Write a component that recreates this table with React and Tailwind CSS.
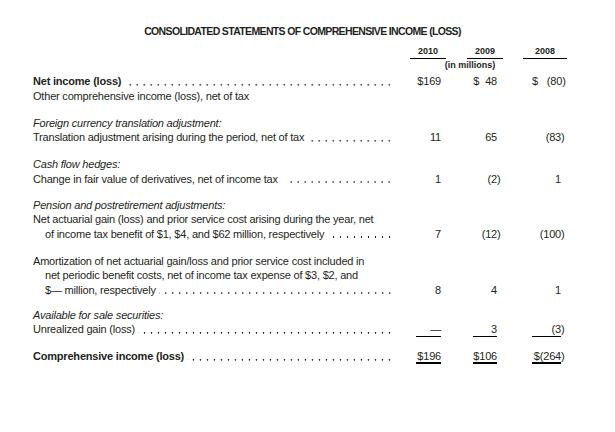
// hanging close paren so digits stay aligned
const Num = ({ children, close }) => (
  <>
    {children}
    {close && <span className="inline-block w-0 text-left">)</span>}
  </>
);

const FS = () => <span className="inline-block w-[6.1px]" />;

const cols = [
  { cell: "ml-[17px] w-[36px]", box: "mr-[5px] w-[25px]" },
  { cell: "ml-[21px] w-[36px]", box: "mr-[6px] w-[24px]" },
  { cell: "ml-[20px] w-[44px]", box: "mr-[6px] w-[29px]" },
];

// dot leader, spaced 7px, anchored to the right edge
const Leader = () => (
  <span className="flex-1 min-w-0 ml-[3px] h-[14.5px] bg-[radial-gradient(circle_at_3.5px_10.4px,#231f20_0.6px,transparent_1.1px)] bg-[length:7px_14.5px] bg-repeat-x bg-right" />
);

const Row = ({ label, bold, italic, indent, values, dots, rule, className = "" }) => (
  <div className={`flex ${className}`}>
    <div className={`flex w-[360px] whitespace-nowrap ${indent ? "pl-[12px]" : ""}`}>
      <span className={`shrink-0 ${bold ? "font-bold" : ""} ${italic ? "italic" : ""}`}>
        {label}
      </span>
      {dots && <Leader />}
    </div>
    {values &&
      values.map((v, i) => (
        <div key={i} className={`${cols[i].cell} flex justify-end`}>
          <div
            className={`${cols[i].box} h-[14.5px] text-right whitespace-nowrap border-black ${
              rule === 1 ? "border-b" : rule === 2 ? "border-b-2" : ""
            }`}
          >
            {v}
          </div>
        </div>
      ))}
  </div>
);

export default function App() {
  return (
    <div className="w-[615px] h-[432px] bg-white pl-[33px] pt-[24px] font-['Liberation_Sans',Arial,sans-serif] text-[11px] leading-[14.5px] tracking-[-0.2px] text-[#231f20]">
      <h1 className="-ml-[33px] pr-[10px] text-center text-[10.5px] leading-[14px] font-bold tracking-[-0.65px]">
        CONSOLIDATED STATEMENTS OF COMPREHENSIVE INCOME (LOSS)
      </h1>

      <div className="flex mt-[6px] text-[9px] leading-[14px] font-bold tracking-normal">
        <div className="w-[360px] shrink-0" />
        <div className="ml-[17px] w-[36px] h-[15px] border-b border-black text-center">2010</div>
        <div className="ml-[21px] w-[36px] h-[15px] border-b border-black text-center">2009</div>
        <div className="ml-[20px] w-[44px] h-[15px] border-b border-black text-center">2008</div>
      </div>
      <div className="flex text-[9px] leading-[13px] font-bold tracking-normal">
        <div className="w-[360px] shrink-0" />
        <div className="ml-[38px] w-[78px] text-center whitespace-nowrap">(in millions)</div>
      </div>

      <Row
        className="mt-[2px]"
        label="Net income (loss)"
        bold
        dots
        values={[
          "$169",
          <>$<FS />48</>,
          <Num close>$<FS /> (80</Num>,
        ]}
      />
      <Row label="Other comprehensive income (loss), net of tax" />

      <Row className="mt-[12.5px]" label="Foreign currency translation adjustment:" italic />
      <Row
        label="Translation adjustment arising during the period, net of tax"
        dots
        values={["11", "65", <Num close>(83</Num>]}
      />

      <Row className="mt-[12.5px]" label="Cash flow hedges:" italic />
      <Row
        label={"Change in fair value of derivatives, net of income tax\u00a0\u00a0\u00a0"}
        dots
        values={["1", <Num close>(2</Num>, "1"]}
      />

      <Row className="mt-[11.5px]" label="Pension and postretirement adjustments:" italic />
      <Row label="Net actuarial gain (loss) and prior service cost arising during the year, net" />
      <Row
        indent
        label={"of income tax benefit of $1, $4, and $62 million, respectively\u00a0\u00a0"}
        dots
        values={["7", <Num close>(12</Num>, <Num close>(100</Num>]}
      />

      <Row
        className="mt-[12.5px]"
        label="Amortization of net actuarial gain/loss and prior service cost included in"
      />
      <Row indent label="net periodic benefit costs, net of income tax expense of $3, $2, and" />
      <Row indent label="$— million, respectively" dots values={["8", "4", "1"]} />

      <Row className="mt-[10.5px]" label="Available for sale securities:" italic />
      <Row
        label="Unrealized gain (loss)"
        dots
        rule={1}
        values={["—", "3", <Num close>(3</Num>]}
      />

      <Row
        className="mt-[12.5px]"
        label="Comprehensive income (loss)"
        bold
        dots
        rule={2}
        values={["$196", "$106", <Num close>$(264</Num>]}
      />
    </div>
  );
}
